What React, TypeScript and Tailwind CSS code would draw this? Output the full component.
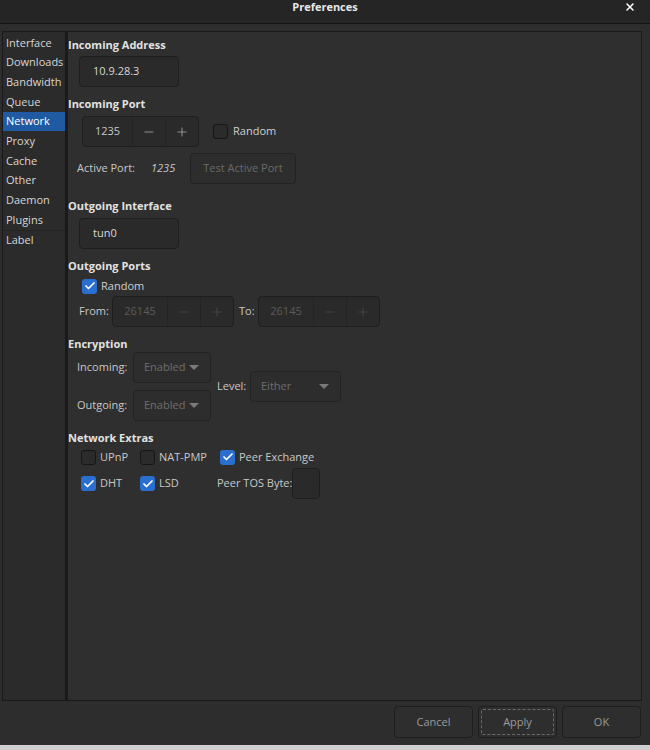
import { Check, Minus, Plus, X } from 'lucide-react'

const font = { fontFamily: '"Open Sans", "Noto Sans", sans-serif' }

const sections = ['Interface', 'Downloads', 'Bandwidth', 'Queue', 'Network', 'Proxy', 'Cache', 'Other', 'Daemon', 'Plugins']

function Box({ checked }: { checked?: boolean }) {
  return checked ? (
    <span className="flex h-[15px] w-[15px] shrink-0 items-center justify-center rounded-[3px] bg-[#2a6fcf]">
      <Check size={12} strokeWidth={3.5} className="text-white" />
    </span>
  ) : (
    <span className="h-[15px] w-[15px] shrink-0 rounded-[3px] border border-[#161616] bg-[#2b2b2b]" />
  )
}

function Heading({ children, className = '' }: { children: React.ReactNode; className?: string }) {
  return <div className={`h-4 text-[11px] leading-4 font-bold text-[#e2e2e2] ${className}`}>{children}</div>
}

function TextBox({ value }: { value: string }) {
  return (
    <div className="ml-[11px] flex h-[31px] w-[100px] items-center rounded-[4px] border border-[#1e1e1e] bg-[#2a2a2a] pl-[13px] text-[11px] text-[#d8d8d8]">
      {value}
    </div>
  )
}

function Spin({ value, disabled, numW }: { value: string; disabled?: boolean; numW: number }) {
  const c = disabled ? 'text-[#5c5c5c]' : 'text-[#c8c8c8]'
  return (
    <div className={`flex h-[31px] rounded-[4px] border border-[#1e1e1e] bg-[#2a2a2a] text-[11px] ${c}`}>
      <div className="flex items-center justify-center" style={{ width: numW }}>{value}</div>
      <div className="flex w-[33px] items-center justify-center border-l border-[#242424]">
        <Minus size={14} strokeWidth={1.4} className={disabled ? 'text-[#4a4a4a]' : 'text-[#a8a8a8]'} />
      </div>
      <div className="flex w-[33px] items-center justify-center border-l border-[#242424]">
        <Plus size={14} strokeWidth={1.4} className={disabled ? 'text-[#4a4a4a]' : 'text-[#a8a8a8]'} />
      </div>
    </div>
  )
}

function Combo({ value, w }: { value: string; w: string }) {
  return (
    <div className={`flex h-[31px] ${w} items-center justify-between rounded-[4px] border border-[#222] bg-[#2d2d2d] pl-[10px] pr-[11px] text-[11px] text-[#6e6e6e]`}>
      {value}
      <span className="h-0 w-0 border-x-[5px] border-t-[5px] border-x-transparent border-t-[#7a7a7a]" />
    </div>
  )
}

function Btn({ label, focus }: { label: string; focus?: boolean }) {
  return (
    <div className="flex h-[32px] w-[79px] items-center justify-center rounded-[4px] border border-[#1e1e1e] bg-[#2e2e2e] p-[2px] text-[11px] text-[#9a9a9a]">
      <div className={`flex h-full w-full items-center justify-center rounded-[2px] ${focus ? 'border border-dashed border-[#6a6a6a]' : ''}`}>
        {label}
      </div>
    </div>
  )
}

export default function App() {
  return (
    <div className="h-[750px] w-[650px] bg-[#cfcfcf]" style={font}>
      <div className="flex h-[745px] flex-col bg-[#2d2d2d]">
        <div className="relative flex h-[24px] justify-center border-b border-[#161616] bg-[#252525] text-[11px] leading-[14px] font-bold text-[#e8e8e8]">
          Preferences
          <X size={12} strokeWidth={3} className="absolute right-[14px] top-[1px] text-white" />
        </div>

        <div className="mt-[7px] flex h-[670px]">
          <div className="ml-[2px] w-[64px] border border-[#1a1a1a] bg-[#2b2b2b] pt-[1px] text-[11px] text-[#d6d6d6]">
            {sections.map((s) => (
              <div key={s} className={`flex h-[19.7px] items-center pl-[3px] ${s === 'Network' ? 'bg-[#1f5aa3] text-white' : ''}`}>
                {s}
              </div>
            ))}
            <div className="h-px bg-[#222]" />
            <div className="flex h-[19.7px] items-center pl-[3px]">Label</div>
          </div>

          <div className="w-[576px] border border-[#1a1a1a] border-l-[2px] bg-[#2f2f2f] pt-[5px] text-[11px] text-[#c8c8c8]">
            <Heading>Incoming Address</Heading>
            <div className="mt-[3px]"><TextBox value="10.9.28.3" /></div>

            <Heading className="mt-[9px]">Incoming Port</Heading>
            <div className="ml-[14px] mt-[4px] flex items-center">
              <Spin value="1235" numW={49} />
              <div className="ml-[14px] flex items-center gap-[5px]">
                <Box />
                <span className="text-[#d0d0d0]">Random</span>
              </div>
            </div>
            <div className="ml-[9px] mt-[6px] flex items-center">
              <span className="w-[74px]">Active Port:</span>
              <span className="w-[39px] italic">1235</span>
              <div className="flex h-[31px] w-[106px] items-center justify-center rounded-[4px] border border-[#222] bg-[#2d2d2d] text-[#6a6a6a]">
                Test Active Port
              </div>
            </div>

            <Heading className="mt-[14px]">Outgoing Interface</Heading>
            <div className="mt-[4px]"><TextBox value="tun0" /></div>

            <Heading className="mt-[9px]">Outgoing Ports</Heading>
            <div className="ml-[14px] mt-[4px] flex h-4 items-center gap-[4px]">
              <Box checked />
              <span className="text-[#d0d0d0]">Random</span>
            </div>
            <div className="ml-[11px] mt-[2px] flex items-center">
              <span className="w-[33px]">From:</span>
              <Spin value="26145" numW={54} disabled />
              <span className="ml-[5px] w-[19px]">To:</span>
              <Spin value="26145" numW={54} disabled />
            </div>

            <Heading className="mt-[9px]">Encryption</Heading>
            <div className="ml-[9px] flex items-center">
              <div className="flex flex-col gap-[7px]">
                <div className="flex items-center">
                  <span className="w-[56px]">Incoming:</span>
                  <Combo value="Enabled" w="w-[78px]" />
                </div>
                <div className="flex items-center">
                  <span className="w-[56px]">Outgoing:</span>
                  <Combo value="Enabled" w="w-[78px]" />
                </div>
              </div>
              <span className="ml-[6px] w-[33px]">Level:</span>
              <Combo value="Either" w="w-[91px]" />
            </div>

            <Heading className="mt-[9px]">Network Extras</Heading>
            <div className="ml-[13px] mt-[3px] flex h-4 items-center">
              <div className="flex w-[59px] items-center gap-[4px]"><Box /><span>UPnP</span></div>
              <div className="flex w-[80px] items-center gap-[4px]"><Box /><span>NAT-PMP</span></div>
              <div className="flex items-center gap-[4px]"><Box checked /><span>Peer Exchange</span></div>
            </div>
            <div className="ml-[13px] mt-[3px] flex h-[31px] items-center">
              <div className="flex w-[59px] items-center gap-[4px]"><Box checked /><span>DHT</span></div>
              <div className="flex w-[77px] items-center gap-[4px]"><Box checked /><span>LSD</span></div>
              <span className="w-[75px] whitespace-nowrap">Peer TOS Byte:</span>
              <div className="h-[31px] w-[28px] rounded-[4px] border border-[#1e1e1e] bg-[#2a2a2a]" />
            </div>
          </div>
        </div>

        <div className="mt-[5px] flex justify-end gap-[5px] pr-[9px]">
          <Btn label="Cancel" />
          <Btn label="Apply" focus />
          <Btn label="OK" />
        </div>
      </div>
    </div>
  )
}
